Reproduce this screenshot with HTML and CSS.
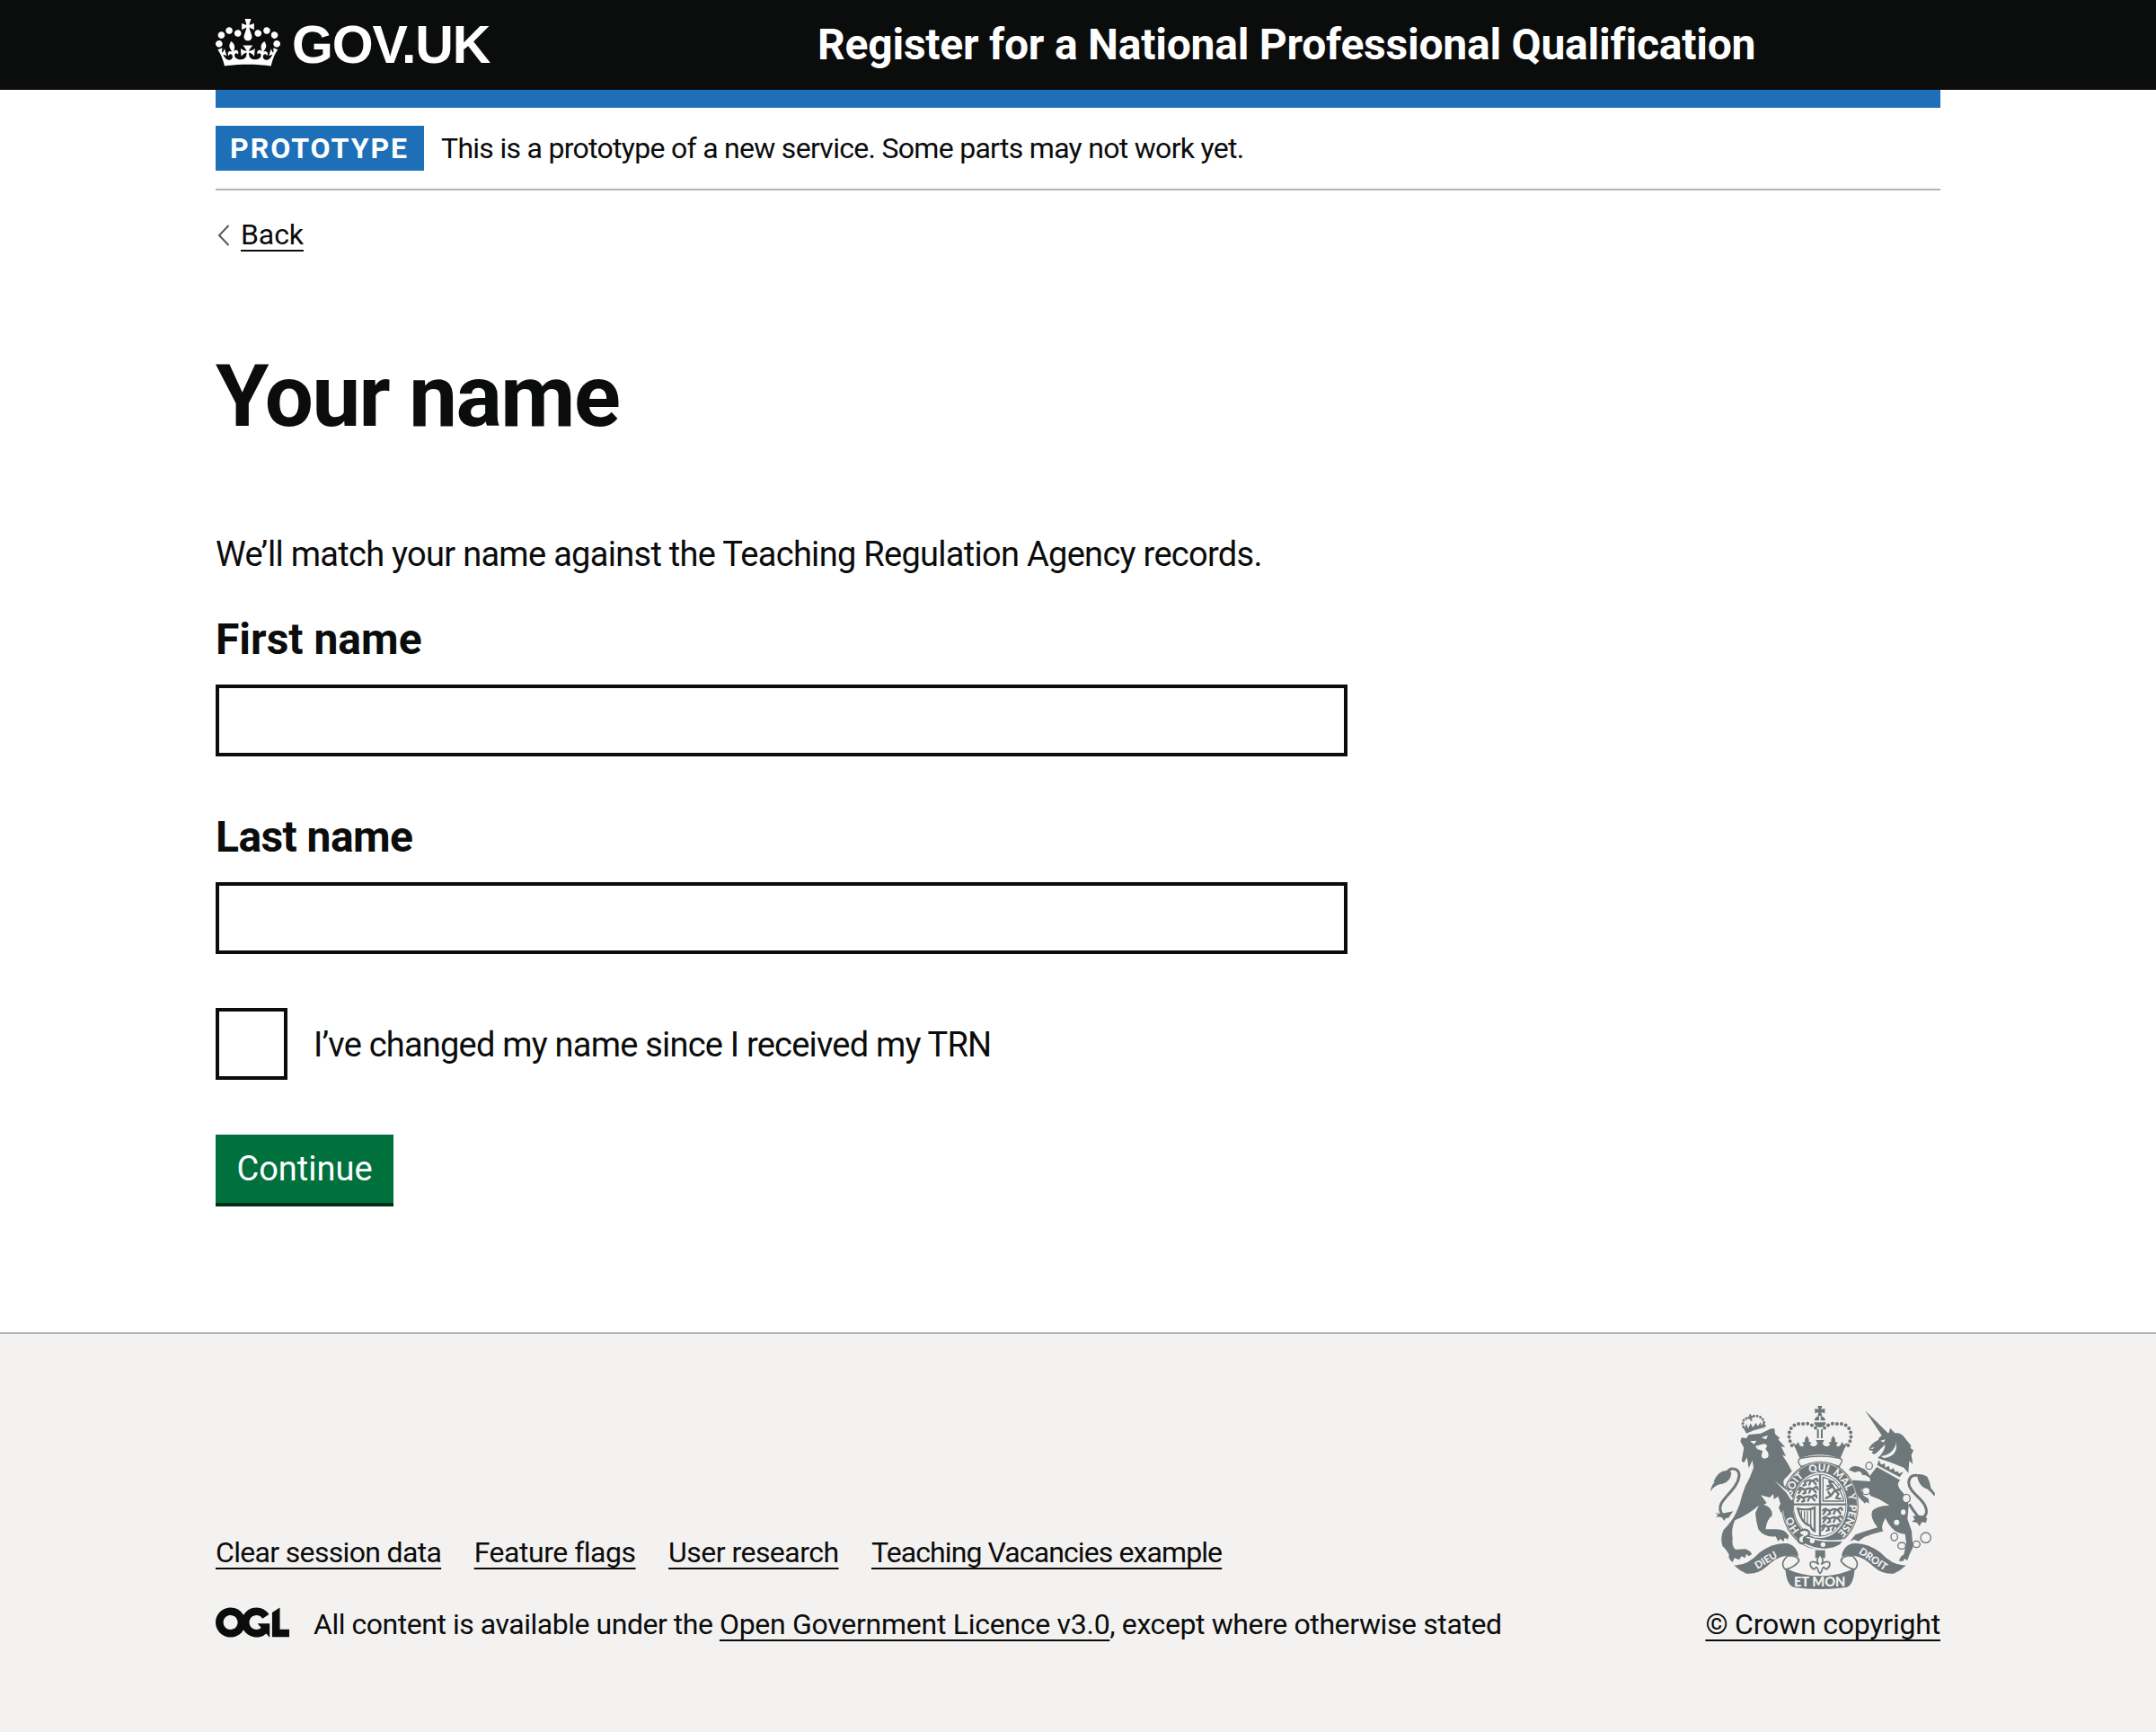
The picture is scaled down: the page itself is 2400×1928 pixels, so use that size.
FILE: index.html
```html
<!DOCTYPE html>
<html lang="en">
<head>
<meta charset="utf-8">
<title>Your name - Register for a National Professional Qualification</title>
<link rel="stylesheet" href="styles.css">
</head>
<body>
<header class="header">
  <div class="container header-inner">
    <a class="logo" href="#">
      <svg class="logo-crown" viewBox="0 0 132 97" width="72" height="53" aria-hidden="true"><path fill="currentColor" fill-rule="evenodd" d="M25 30.2c3.5 1.5 7.7-.2 9.1-3.7 1.5-3.6-.2-7.8-3.9-9.2-3.6-1.4-7.6.3-9.1 3.9-1.4 3.5.3 7.5 3.9 9zM9 39.5c3.6 1.5 7.8-.2 9.2-3.7 1.5-3.6-.2-7.8-3.9-9.1-3.6-1.5-7.6.2-9.1 3.8-1.4 3.5.3 7.5 3.8 9zM4.4 57.2c3.5 1.5 7.7-.2 9.1-3.8 1.5-3.6-.2-7.7-3.9-9.1-3.5-1.5-7.6.3-9.1 3.8-1.4 3.5.3 7.6 3.9 9.1zm38.3-21.4c3.5 1.5 7.7-.2 9.1-3.8 1.5-3.6-.2-7.7-3.9-9.1-3.6-1.5-7.6.3-9.1 3.8-1.3 3.6.4 7.7 3.9 9.1zm64.4-5.6c-3.6 1.5-7.8-.2-9.1-3.7-1.5-3.6.2-7.8 3.8-9.2 3.6-1.4 7.7.3 9.2 3.9 1.3 3.5-.4 7.5-3.9 9zm15.9 9.3c-3.6 1.5-7.7-.2-9.1-3.7-1.5-3.6.2-7.8 3.7-9.1 3.6-1.5 7.7.2 9.2 3.8 1.5 3.5-.3 7.5-3.8 9zm4.7 17.7c-3.6 1.5-7.8-.2-9.2-3.8-1.5-3.6.2-7.7 3.9-9.1 3.6-1.5 7.7.3 9.2 3.8 1.3 3.5-.4 7.6-3.9 9.1zM89.3 35.8c-3.6 1.5-7.8-.2-9.2-3.8-1.4-3.6.2-7.7 3.9-9.1 3.6-1.5 7.7.3 9.2 3.8 1.4 3.6-.3 7.7-3.9 9.1zM69.7 17.7l8.9 4.7V9.3l-8.9 2.8c-.2-.3-.5-.6-.9-.9L72.4 0H59.6l3.5 11.2c-.3.3-.6.5-.9.9l-8.8-2.8v13.1l8.8-4.7c.3.3.6.7.9.9l-5 15.4v.1c-.2.8-.4 1.6-.4 2.4 0 4.1 3.1 7.5 7 8.1h.2c.3 0 .7.1 1 .1.4 0 .7 0 1-.1h.2c4-.6 7.1-4.1 7.1-8.1 0-.8-.1-1.7-.4-2.4V34l-5.1-15.4c.4-.2.7-.6 1-.9zM66 92.8c16.9 0 32.8 1.1 47.1 3.2 4-16.9 8.9-26.7 14-33.5l-9.6-3.4c1 4.9 1.1 7.2 0 10.2-1.5-1.4-3-4.3-4.2-8.7L108.6 76c2.8-2 5-3.2 7.5-3.3-4.4 9.4-10 11.9-13.6 11.2-4.3-.8-6.3-4.6-5.6-7.9 1-4.7 5.7-5.9 8-.5 4.3-8.7-3-11.4-7.6-8.8 7.1-7.2 7.9-13.5 2.1-21.1-8 6.1-8.1 12.3-4.5 20.8-4.7-5.4-12.1-2.5-9.5 6.2 3.4-5.2 7.9-2 7.2 3.1-.6 4.3-6.4 7.8-13.5 7.2-10.3-.9-10.9-8-11.2-13.8 2.5-.5 7.1 1.8 11 7.3L80.2 60c-4.1 4.4-8 5.3-12.3 5.4 1.4-4.4 8-11.6 8-11.6H55.5s6.4 7.2 7.9 11.6c-4.2-.1-8-1-12.3-5.4l1.4 16.4c3.9-5.5 8.5-7.7 10.9-7.3-.3 5.8-.9 12.8-11.1 13.8-7.2.6-12.9-2.9-13.5-7.2-.7-5 3.8-8.3 7.1-3.1 2.7-8.7-4.6-11.6-9.4-6.2 3.7-8.5 3.6-14.7-4.6-20.8-5.8 7.6-5 13.9 2.2 21.1-4.7-2.6-11.9.1-7.7 8.8 2.3-5.5 7.1-4.2 8.1.5.7 3.3-1.3 7.1-5.7 7.9-3.5.7-9-1.8-13.5-11.2 2.5.1 4.7 1.3 7.5 3.3l-4.7-15.4c-1.2 4.4-2.7 7.2-4.3 8.7-1.1-3-.9-5.3 0-10.2l-9.5 3.4c5 6.9 9.9 16.7 14 33.5 14.8-2.1 30.8-3.2 47.7-3.2z"/></svg>
      <span class="logo-text">GOV.UK</span>
    </a>
    <a class="service-name" href="#">Register for a National Professional Qualification</a>
  </div>
</header>

<div class="container">
  <div class="phase-banner">
    <strong class="tag">PROTOTYPE</strong>
    <span class="phase-text">This is a prototype of a new service. Some parts may not work yet.</span>
  </div>
  <a class="back" href="#">
    <svg class="chevron" viewBox="0 0 16 26" width="16" height="26" aria-hidden="true"><path d="M14.5 2 4 13l10.5 11" fill="none" stroke="#505a5f" stroke-width="2"/></svg>
    <span class="link back-text">Back</span>
  </a>
  <main class="main">
    <h1 class="title">Your name</h1>
    <p class="lead">We’ll match your name against the Teaching Regulation Agency records.</p>
    <form class="form">
      <div class="field">
        <label class="label" for="first">First name</label>
        <input class="input" id="first" type="text">
      </div>
      <div class="field">
        <label class="label label-last" for="last">Last name</label>
        <input class="input" id="last" type="text">
      </div>
      <div class="check">
        <input class="checkbox" id="changed" type="checkbox">
        <label class="check-label" for="changed">I’ve changed my name since I received my TRN</label>
      </div>
      <button class="button" type="button">Continue</button>
    </form>
  </main>
</div>

<footer class="footer">
  <div class="container footer-inner">
    <div class="footer-meta">
      <nav class="footer-links">
        <a class="link f1" href="#">Clear session data</a>
        <a class="link f2" href="#">Feature flags</a>
        <a class="link f3" href="#">User research</a>
        <a class="link f4" href="#">Teaching Vacancies example</a>
      </nav>
      <div class="licence">
        <svg class="ogl" viewBox="0 0 483.2 195.7" width="82" height="34" aria-hidden="true"><path fill="currentColor" d="M421.5 142.8V.1l-50.7 32.3v161.1h112.4v-50.7zm-122.3-9.6A47.12 47.12 0 0 1 221 97.8c0-26 21.1-47.1 47.1-47.1 16.7 0 31.4 8.7 39.7 21.8l42.7-27.2A97.63 97.63 0 0 0 268.1 0c-36.5 0-68.3 20.1-85.1 49.7A98 98 0 0 0 97.8 0C43.9 0 0 43.9 0 97.8s43.9 97.8 97.8 97.8c36.5 0 68.3-20.1 85.1-49.7a97.76 97.76 0 0 0 149.6 25.4l19.4 22.2h3v-87.8h-80l24.3 27.5zM97.8 145c-26 0-47.1-21.1-47.1-47.1s21.1-47.1 47.1-47.1 47.1 21.1 47.1 47.1S123.8 145 97.8 145"/></svg>
        <span class="licence-text">All content is available under the <a class="link licence-link" href="#">Open Government Licence v3.0</a><span class="licence-end">, except where otherwise stated</span></span>
      </div>
    </div>
    <a class="copyright" href="#">
      <svg class="crest" viewBox="72 72 750 612" width="250" height="204" aria-hidden="true">
        <defs>
          <path id="motto" d="M438 518A98 114 0 0 1 438 290A98 114 0 0 1 438 518"/>
          <clipPath id="shield"><ellipse cx="437" cy="404" rx="86" ry="101"/></clipPath>
          <path id="guard" fill="none" stroke="#6e7779" stroke-width="7" stroke-linecap="round" stroke-linejoin="round" d="M0 8q6-9 13-3t16 1 18 1l10-7M8 10l-7 10M20 9l4 10-8 3M40 9l-4 10M50 8l8 10M56 2q8-6 8 5"/>
        </defs>
        <!-- crown -->
        <g fill="#6e7779">
          <path d="M430 72h15l-3 12 12-4v17l-12-4 3 13h-15l3-13-12 4V80l12 4z"/>
          <path d="M419 121q2-13 16-15v15zM440 106q14 2 16 15h-16zM418 127h40q-2 15-20 17-18-2-20-17z"/>
          <path d="M428 150h6v30h-6zM441 150h6v30h-6z"/>
          <path d="M370 247L358 218 346 194 358 202 366 192Q368 208 380 208L384 202 378 194 388 192Q384 184 394 172Q404 184 400 192L410 194 404 202Q412 210 422 206L430 198 424 186H452L446 198 454 206Q464 210 472 202L466 194 476 192Q472 184 482 172Q492 184 488 192L498 194 492 202 496 208Q508 208 510 192L518 202 530 194 518 218 506 247Q438 222 370 247Z"/>
        </g>
        <path d="M344 204C320 160 345 126 380 132C402 128 416 138 426 148M532 204C556 160 531 126 496 132C474 128 460 138 450 148" fill="none" stroke="#6e7779" stroke-width="12" stroke-linecap="round" stroke-dasharray="0 15"/>
        <path d="M378 246Q438 234 498 246 516 248 510 260L502 274Q438 252 374 274L366 262Q364 248 378 246Z" fill="#f3f2f1" stroke="#6e7779" stroke-width="4"/>
        <!-- garter -->
        <ellipse cx="438" cy="404" rx="110" ry="128" fill="#f3f2f1" stroke="#6e7779" stroke-width="38"/>
        <ellipse cx="438" cy="404" rx="125" ry="143" fill="none" stroke="#f3f2f1" stroke-width="2"/>
        <g class="motto">
          <text><textPath href="#motto" startOffset="15.5%">HO</textPath></text>
          <text><textPath href="#motto" startOffset="35.5%">SOIT</textPath></text>
          <text><textPath href="#motto" startOffset="49.5%">QUI</textPath></text>
          <text><textPath href="#motto" startOffset="62%">MAL</textPath></text>
          <text><textPath href="#motto" startOffset="71%">Y</textPath></text>
          <text><textPath href="#motto" startOffset="82.5%">PENSE</textPath></text>
        </g>
        <!-- shield quarters -->
        <ellipse cx="437" cy="404" rx="88" ry="103" fill="#f3f2f1" stroke="#6e7779" stroke-width="3"/>
        <g clip-path="url(#shield)">
          <g id="lions"><use href="#guard" x="366" y="316"/><use href="#guard" x="366" y="343"/><use href="#guard" x="362" y="370"/></g>
          <use href="#lions" x="82" y="97"/>
          <path d="M448 310V390H518M448 310Q500 322 518 390" fill="none" stroke="#6e7779" stroke-width="4"/>
          <path d="M458 380L474 372 466 360M474 372L488 354 500 366 492 380 506 382M488 354L478 336 462 340M478 342L462 352M474 334L468 324 482 326M494 352Q506 356 510 340L500 334" fill="none" stroke="#6e7779" stroke-width="7" stroke-linecap="round" stroke-linejoin="round"/>
          <path d="M364 415Q396 423 420 412V490Q410 486 406 472 378 468 364 415Z" fill="none" stroke="#6e7779" stroke-width="7"/>
          <path d="M376 422v20M386 424v34M396 424v44M407 420v56" stroke="#6e7779" stroke-width="4"/>
        </g>
        <path d="M438 302v206M350 401h175" stroke="#6e7779" stroke-width="7"/>
        <!-- buckle and strap end -->
        <path d="M376 504Q440 530 518 520L506 536Q450 568 380 530Z" fill="#6e7779" stroke="#f3f2f1" stroke-width="5"/>
        <path d="M368 492Q390 478 402 494 404 504 388 510 378 518 388 528 376 536 366 524 362 510 376 504 366 500 368 492Z" fill="#f3f2f1" stroke="#6e7779" stroke-width="7"/>
        <circle cx="412" cy="523" r="8" fill="#f3f2f1"/><circle cx="448" cy="535" r="8" fill="#f3f2f1"/>
        <!-- fleur-de-lis -->
        <path d="M422 554h33v26h-33z" fill="#6e7779"/>
        <path d="M438 568q-16 18-5 32-18-14-27-4-3 14 12 22l8-8q6 4 6 14l6 7 6-7q0-10 6-14l8 8q15-8 12-22-9-10-27 4 11-14-5-32z" fill="#f3f2f1" stroke="#6e7779" stroke-width="5" stroke-linejoin="round"/>
        <!-- lion -->
        <path fill="#6e7779" d="M172 190L176 178 192 180 200 168 240 164 274 148 286 148 288 166 304 180 298 184 322 210 308 208 324 240 312 236 330 264 344 290 330 306 318 318Q312 330 322 344L342 372 350 396 344 424 338 410 332 424 324 432 318 416 308 430 300 412 306 398 298 374 284 384 282 366 270 378 240 370 260 396 250 402Q280 410 278 438 260 452 256 484L292 484Q322 484 334 506L330 518 320 512 316 526 306 516 298 524 290 508Q250 512 232 484 224 456 222 430L234 404Q196 436 154 454 140 484 146 514 142 540 156 552L188 550Q208 556 210 568L200 574 192 566 188 580 176 574 168 586 152 580 146 594Q130 582 134 568L122 550 112 540Q104 510 116 486 148 452 158 428 172 400 178 370 186 340 204 310L216 278 212 254 200 280 194 244 184 262 176 256 184 212Z"/>
        <path fill="#6e7779" d="M192 164L176 134 186 146 192 132 198 148 206 130 214 144 224 128 230 140 240 126 242 138 252 122 252 144Q222 150 192 164Z"/>
        <path d="M182 142Q174 112 204 112M253 138Q250 102 216 106" fill="none" stroke="#6e7779" stroke-width="9" stroke-dasharray="0 11" stroke-linecap="round"/>
        <path d="M196 112L216 107M204 100L209 122" stroke="#6e7779" stroke-width="6"/>
        <path fill="#f3f2f1" d="M204 190L226 188 218 200ZM242 178L264 170 258 184ZM222 206L252 198 262 204 256 216Q272 234 264 244 248 254 242 240L246 222 228 216ZM286 322L330 356 348 382 342 388 326 362Z"/>
        <path fill="none" stroke="#6e7779" stroke-width="9" d="M114 436Q98 422 108 398C124 370 164 342 168 306Q168 280 142 282 126 288 128 302"/>
        <path fill="#6e7779" d="M72 358Q76 332 88 326L82 326Q98 284 132 288L142 294Q140 326 112 332 86 334 72 358ZM88 430L108 432 148 424 132 446 124 446 118 456 110 444 90 442 98 436Z"/>
        <!-- unicorn -->
        <path fill="#6e7779" d="M588 87L665 163 645 172ZM645 170L668 162 672 146 688 163Q710 160 722 180L742 205 740 213 750 220 743 236 748 266 736 256 733 296 718 278 676 262 630 246Q654 226 656 200L640 216 628 228 618 234 610 228 616 222 602 220 602 212Q612 196 632 186 634 176 645 170Z"/>
        <path fill="#6e7779" d="M628 275L708 318Q690 330 706 352 730 376 734 406L730 450 744 490 748 545 736 570 730 588 720 582 716 590 702 590Q704 576 718 568L726 530 722 500Q694 498 678 480 664 464 656 446L648 464Q642 482 650 490L612 500 586 510 566 524 552 518 538 524 556 502Q584 492 630 478 604 446 612 424 628 404 670 404L636 384 606 372 600 354 584 346 574 352 584 372 600 382 602 398 592 392 588 398 566 376 552 336 544 324 550 320 606 324 604 312 590 304 578 302Q578 292 566 290L554 294 534 286Q548 264 578 280 594 284 604 306Z"/>
        <path fill="none" stroke="#6e7779" stroke-width="9" d="M736 400Q748 420 764 440C790 452 800 430 788 404C774 376 736 360 734 328Q736 302 762 304"/>
        <path fill="#6e7779" d="M754 302Q778 296 796 308 806 326 808 346L822 364 820 374Q802 350 786 346 768 336 762 306ZM748 440L764 438 796 446 792 462 778 460 770 474 762 462 744 458 754 452Z"/>
        <path d="M624 274L630 246 722 290 706 320Z" fill="#f3f2f1"/>
        <path d="M634 252L629 270 704 310 717 292 702 298 698 290 688 292 684 280 672 286 668 272 656 278 654 264 642 268Z" fill="#6e7779"/>
        <path d="M640 188L656 184 650 194ZM642 240Q686 232 692 194 700 240 650 246ZM604 214L620 210 614 216Z" fill="#f3f2f1"/>
        <g fill="#f3f2f1" stroke="#6e7779" stroke-width="4">
          <ellipse cx="602" cy="272" rx="11" ry="12"/><ellipse cx="592" cy="356" rx="13" ry="12"/><ellipse cx="726" cy="381" rx="13" ry="14"/>
          <ellipse cx="716" cy="427" rx="10" ry="11"/><ellipse cx="694" cy="461" rx="11" ry="11"/><ellipse cx="686" cy="509" rx="11" ry="13"/>
          <ellipse cx="711" cy="539" rx="13" ry="11"/><ellipse cx="760" cy="534" rx="12" ry="11"/><circle cx="791" cy="512" r="17"/>
        </g>
        <!-- scroll -->
        <path d="M150 604Q194 608 236 562 284 526 332 532 362 540 366 576 340 566 326 572 292 576 258 610 228 636 192 632 168 622 150 604Z" fill="#6e7779"/>
        <path d="M726 604Q682 608 640 562 592 526 544 532 514 540 510 576 536 566 550 572 584 576 618 610 648 636 684 632 708 622 726 604Z" fill="#6e7779"/>
        <path d="M330 572Q366 572 368 590 352 612 322 618 302 600 330 572ZM546 572Q510 572 508 590 524 612 554 618 574 600 546 572Z" fill="#f3f2f1" stroke="#6e7779" stroke-width="5"/>
        <path d="M322 614Q378 640 438 640 498 640 554 614 550 674 524 678 438 690 352 678 326 672 322 614Z" fill="#6e7779"/>
        <g class="scroll-text">
          <text x="257" y="599" transform="rotate(-31 257 587)">DIEU</text>
          <text x="437" y="676" class="et-mon">ET MON</text>
          <text x="616" y="595" transform="rotate(34 616 583)">DROIT</text>
        </g>
      </svg>
      <span class="link copyright-text">© Crown copyright</span>
    </a>
  </div>
</footer>
</body>
</html>
```
FILE: styles.css
```css
* { box-sizing: border-box; }
body {
  margin: 0;
  min-height: 1928px;
  display: flex;
  flex-direction: column;
  background: #fff;
  color: #0b0c0c;
  font-family: Roboto, "Liberation Sans", sans-serif;
  font-size: 32px;
  line-height: 40px;
}
a { color: inherit; text-decoration: none; }
svg { display: block; flex: none; }
.container { width: 1920px; margin: 0 auto; }
.link {
  text-decoration: underline;
  text-decoration-thickness: 2px;
  text-underline-offset: 6px;
  text-decoration-skip-ink: none;
}

.header { height: 100px; background: #0b0c0c; color: #fff; }
.header-inner { display: flex; height: 100px; }
.logo { display: flex; width: 670px; gap: 13px; }
.logo-crown { margin-top: 21px; }
.logo-text {
  font: 700 59px/100px "Liberation Sans", Arial, sans-serif;
  letter-spacing: -1.2px;
}
.service-name {
  font-size: 48px;
  font-weight: 700;
  line-height: 100px;
  letter-spacing: -0.23px;
  white-space: nowrap;
}

.phase-banner {
  display: flex;
  gap: 19px;
  height: 112px;
  padding-top: 20px;
  border-top: 20px solid #1d70b8;
  border-bottom: 2px solid #b1b4b6;
  line-height: 50px;
}
.tag {
  width: 232px;
  height: 50px;
  padding-left: 16px;
  background: #1d70b8;
  color: #fff;
  font-weight: 700;
  letter-spacing: 2px;
}
.phase-text { letter-spacing: -0.71px; white-space: nowrap; }

.back { display: flex; gap: 12px; width: 100px; margin-top: 29px; }
.chevron { margin-top: 8px; }
.back-text { letter-spacing: -0.1px; }

.main { padding-top: 110px; }
.title {
  margin: 0;
  font-size: 96px;
  font-weight: 700;
  line-height: 100px;
  letter-spacing: -1.6px;
}
.lead { margin: 101px 0 0; font-size: 38px; line-height: 50px; letter-spacing: -0.71px; }
.form { display: flex; flex-direction: column; align-items: flex-start; padding-top: 40px; }
.field { display: flex; flex-direction: column; width: 1260px; margin-bottom: 60px; }
.label { height: 80px; font-size: 48px; font-weight: 700; line-height: 60px; }
.label-last { letter-spacing: -0.58px; }
.input {
  width: 1260px;
  height: 80px;
  margin: 0;
  border: 4px solid #0b0c0c;
  border-radius: 0;
  background: #fff;
}
.check { display: flex; gap: 29px; margin-bottom: 60px; }
.checkbox {
  appearance: none;
  width: 80px;
  height: 80px;
  margin: 0;
  border: 4px solid #0b0c0c;
  background: #fff;
}
.check-label { padding-top: 1px; font-size: 38px; line-height: 80px; letter-spacing: -0.79px; }
.button {
  width: 198px;
  height: 76px;
  padding: 1px 0 0;
  border: 0;
  background: #00703c;
  box-shadow: 0 4px 0 #002d18;
  color: #fff;
  font: 400 38px/75px Roboto, "Liberation Sans", sans-serif;
}

.footer { flex: 1; margin-top: 144px; border-top: 2px solid #b1b4b6; background: #f3f2f1; }
.footer-inner { display: flex; justify-content: space-between; align-items: flex-end; padding-top: 80px; }
.footer-links { display: flex; gap: 36.5px; }
.f1 { letter-spacing: -0.67px; }
.f2 { letter-spacing: -0.48px; }
.f3 { letter-spacing: -0.53px; }
.f4 { letter-spacing: -0.9px; }
.licence { display: flex; gap: 27px; margin-top: 40px; }
.ogl { margin-top: 1px; }
.licence-text { letter-spacing: -0.47px; white-space: nowrap; }
.licence-link { letter-spacing: -0.28px; }
.licence-end { letter-spacing: -0.39px; }
.copyright { display: flex; flex-direction: column; align-items: center; gap: 19px; }
.copyright-text { letter-spacing: -0.2px; }
.motto { fill: #f3f2f1; font: 900 34px Lato, sans-serif; text-anchor: middle; }
.scroll-text { fill: #f3f2f1; font: 900 34px Lato, sans-serif; text-anchor: middle; }
.et-mon { font-size: 44px; }
```
